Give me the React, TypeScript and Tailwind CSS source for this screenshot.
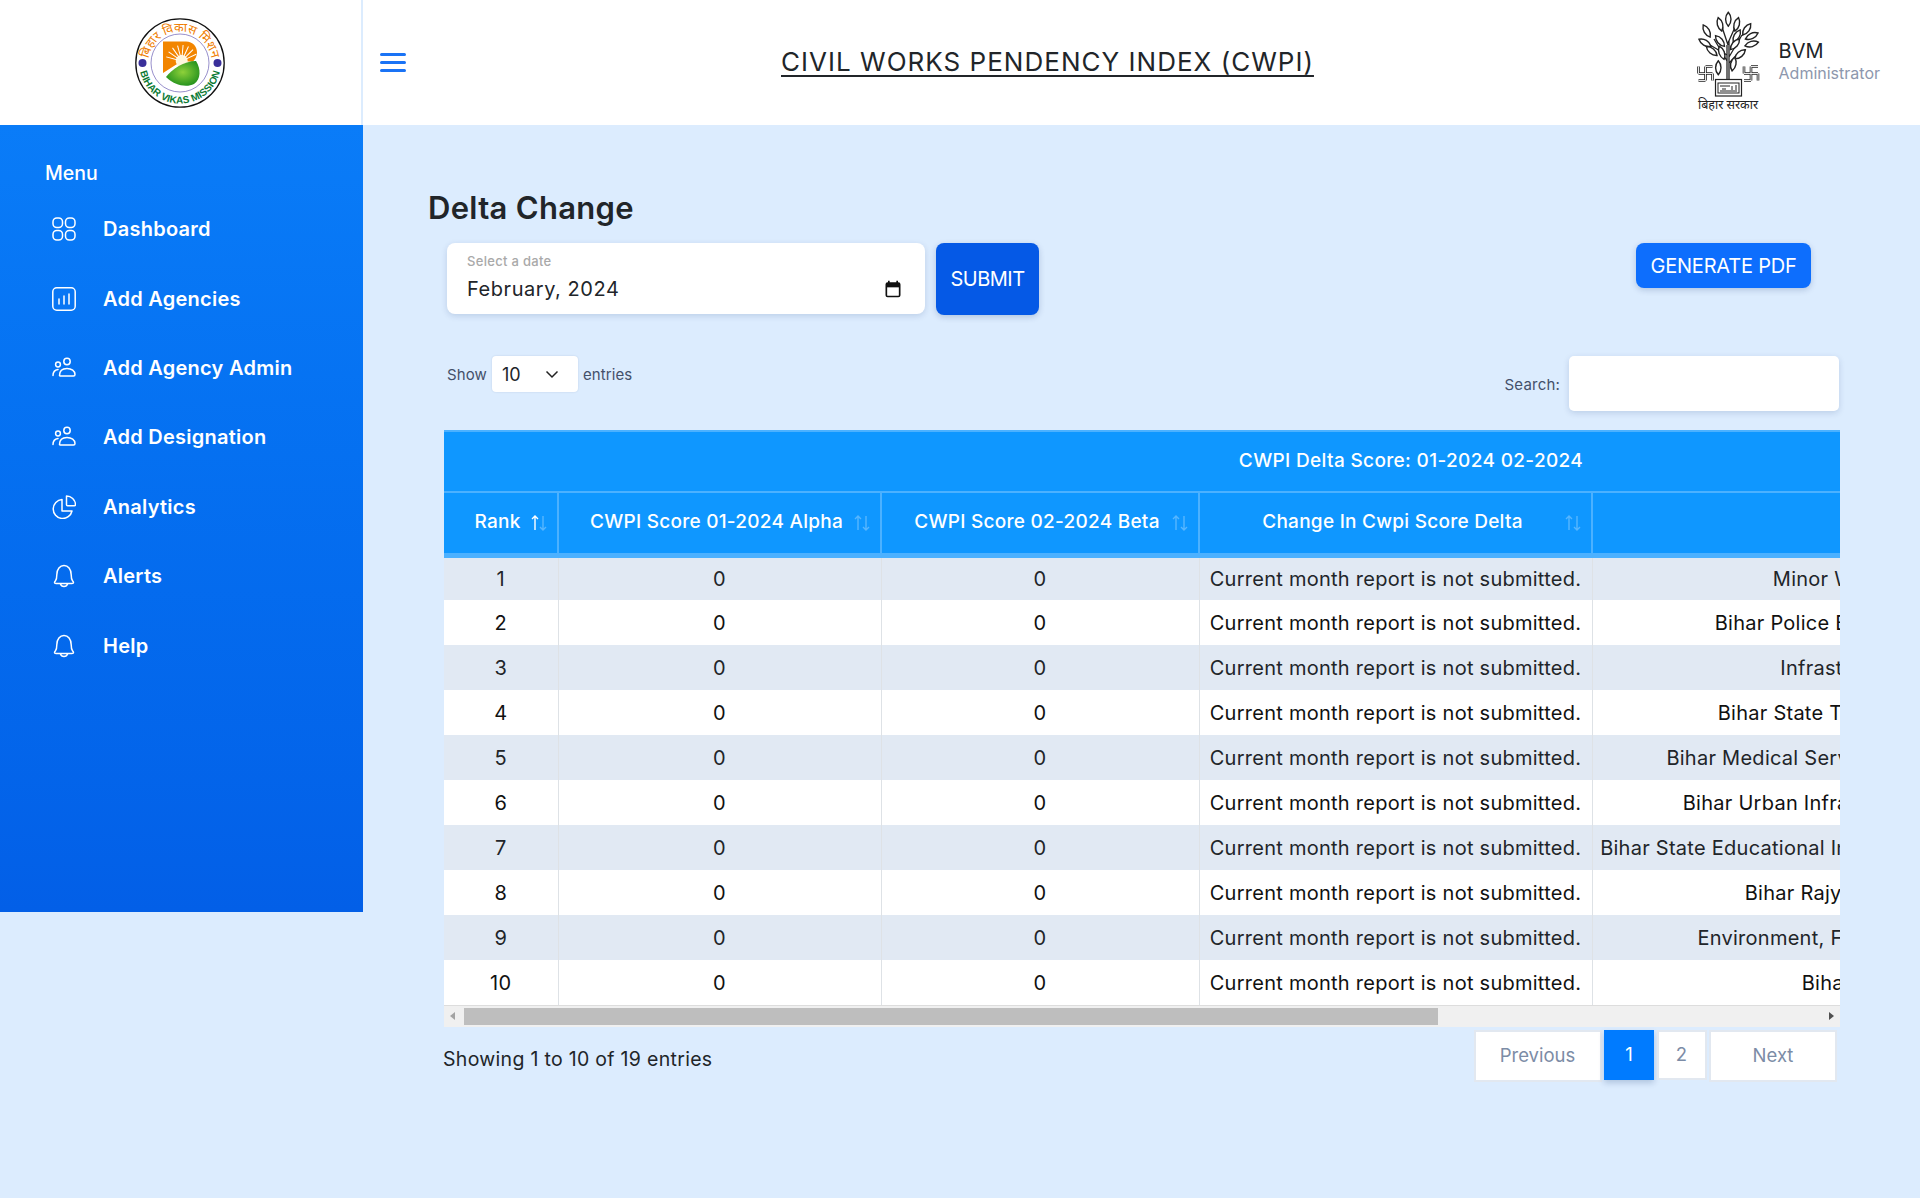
import React from "react";

const rows = [
  "Minor Water Resources Division",
  "Bihar Police Building Construction Corp. Ltd",
  "Infrastructure Devel. Authority",
  "Bihar State Tourism Development Corp. Ltd",
  "Bihar Medical Services & Infrastructure Corp. Limited.",
  "Bihar Urban Infrastructure Development Corp. Ltd.",
  "Bihar State Educational Infrastructure Development Corporation Ltd",
  "Bihar Rajya Pul Nirman Nigam Limited",
  "Environment, Forest and Climate Change Deptt.",
  "Bihar Rural Roads Agency",
];

function Sort({ active = false }: { active?: boolean }) {
  return (
    <svg width="18" height="18" viewBox="0 0 18 18" fill="none" strokeWidth="1.4" stroke="white" className="absolute right-[9px] top-1/2 -translate-y-1/2">
      <path d="M5 16V2M2 5l3-3 3 3" opacity={active ? 1 : 0.3} />
      <path d="M13 2v14M10 13l3 3 3-3" opacity="0.3" />
    </svg>
  );
}

function NavIcon({ kind }: { kind: string }) {
  const c = { width: 24, height: 24, viewBox: "0 0 24 24", fill: "none", stroke: "white", strokeWidth: 1.5, strokeLinecap: "round" as const, strokeLinejoin: "round" as const };
  if (kind === "grid")
    return (
      <svg {...c}>
        <rect x="1" y="1" width="9.5" height="9.5" rx="3.8" />
        <rect x="13.5" y="1" width="9.5" height="9.5" rx="3.8" />
        <rect x="1" y="13.5" width="9.5" height="9.5" rx="3.8" />
        <rect x="13.5" y="13.5" width="9.5" height="9.5" rx="3.8" />
      </svg>
    );
  if (kind === "chart")
    return (
      <svg {...c}>
        <rect x="0.8" y="0.8" width="22.4" height="22.4" rx="4" />
        <path d="M7 12v5M12 9v8M17 7v10" />
      </svg>
    );
  if (kind === "people")
    return (
      <svg {...c}>
        <circle cx="15" cy="5.5" r="3.2" />
        <circle cx="6" cy="8.5" r="2.4" />
        <path d="M7.5 19.5c0-4.5 3-7 7.5-7s8 2.5 8 6c0 .8-.5 1.5-1.5 1.5H8.5c-.6 0-1-.2-1-.5z" />
        <path d="M1 19.5c0-3 1.5-5.5 5-6" />
      </svg>
    );
  if (kind === "pie")
    return (
      <svg {...c}>
        <path d="M10 4.5a9.5 9.5 0 1 0 10 11.5H10z" />
        <path d="M14.5 1a9 9 0 0 1 9 8.5c0 .8-.5 1.2-1.2 1.2H15.5a1 1 0 0 1-1-1z" />
      </svg>
    );
  return (
    <svg {...c}>
      <path d="M2.5 18.5c0-.5.4-1 1-1.700 1-1.200 1.300-2.300 1.300-6C4.800 5 8 1.500 12 1.500s7.200 3.500 7.200 9.300c0 3.700.3 4.800 1.300 6 .6.700 1 1.200 1 1.700 0 .7-.6 1-1.500 1H4c-.9 0-1.500-.3-1.500-1z" />
      <path d="M8.500 20c.5 1.700 2 2.500 3.500 2.500s3-.8 3.500-2.500" />
    </svg>
  );
}

function Logo() {
  return (
    <svg width="92" height="92" viewBox="0 0 92 92" className="block">
      <defs>
        <path id="topArc" d="M14.5 50a31.700 31.700 0 1 1 63 0" />
        <path id="botArc" d="M5.5 52a41 41 0 0 0 81 0" />
        <radialGradient id="leafG" cx="0.5" cy="0.45" r="0.6">
          <stop offset="0" stopColor="#8ed13a" />
          <stop offset="1" stopColor="#1f8f1c" />
        </radialGradient>
      </defs>
      <circle cx="46" cy="46" r="44.2" fill="white" stroke="#111" strokeWidth="1.3" />
      <circle cx="46" cy="46" r="29" fill="none" stroke="#6a5fb5" strokeWidth="0.7" />
      <circle cx="8.5" cy="46" r="4" fill="#3a2f9a" />
      <circle cx="83.5" cy="46" r="4" fill="#3a2f9a" />
      <path d="M29 24.5H52c7 0 11 5 11 11 0 4-2 7-4 9H47L29 56z" fill="#f28500" />
      <circle cx="47.7" cy="44" r="6" fill="#fff6dc" />
      {[-75, -55, -35, -15, 5, 25, 45, 65].map((a) => (
        <rect key={a} x="47.2" y="28" width="1" height="11" fill="#fff" transform={`rotate(${a} 47.7 44)`} />
      ))}
      <path d="M32 60C38 52 50 44 62 44 67 52 67 62 60 67 52 71 40 68 32 60z" fill="url(#leafG)" />
      <text fontSize="12.5" fill="#ef7d00" fontFamily="'Noto Sans Devanagari','Lohit Devanagari','Noto Sans',sans-serif">
        <textPath href="#topArc" startOffset="50%" textAnchor="middle">बिहार विकास मिशन</textPath>
      </text>
      <text fontSize="10" fontWeight="700" fill="#0b7a34" fontFamily="'Liberation Sans',sans-serif">
        <textPath href="#botArc" startOffset="50%" textAnchor="middle">BIHAR VIKAS MISSION</textPath>
      </text>
    </svg>
  );
}

const leaves: [number, number, number][] = [
  [10.7, 20, -30], [24, 13.3, -15], [32.3, 8.3, 0], [40.7, 13.3, 15], [50.7, 18.3, 35], [55.7, 25, 65],
  [9, 31.7, -60], [24, 30, -40], [40.7, 25, 30], [55.7, 33, 75], [15.7, 40, -50], [25.7, 41.7, -20],
  [39, 33.3, 40], [44, 43.3, 50], [22.3, 56.7, 0], [37.3, 53, 10],
];

function Cross({ x }: { x: number }) {
  const d = "M7 0V14M0 7H14M7 0H14M14 7V14M7 14H0M0 7V0";
  return (
    <g transform={`translate(${x} 55.5)`} fill="none">
      <path d={d} stroke="#222" strokeWidth="2.6" />
      <path d={d} stroke="#fff" strokeWidth="0.9" />
    </g>
  );
}

function Emblem() {
  return (
    <svg width="64" height="100" viewBox="0 0 64 100" className="block">
      <path d="M31 68V34M33 68V30M31 50L18 28M31 44L14 34M33 46L46 24M33 52L46 40M32 34L26 16M32 32L40 14" stroke="#222" strokeWidth="1.3" fill="none" />
      {leaves.map(([x, y, r], i) => (
        <path key={i} d="M0-7C3.6-3 3.6 3 0 7-3.6 3-3.6-3 0-7z" fill="white" stroke="#222" strokeWidth="1.4" transform={`translate(${x} ${y}) rotate(${r})`} />
      ))}
      <Cross x={2.5} />
      <Cross x={48} />
      <rect x="19.5" y="68.5" width="26" height="16.5" fill="white" stroke="#222" strokeWidth="1.2" />
      <rect x="22" y="72" width="21" height="10" fill="white" stroke="#222" strokeWidth="1" />
      <path d="M24 75h10M26 78h4M36 75v4M40 74v5M24 80h17" stroke="#222" strokeWidth="1" />
      <text x="32" y="98" textAnchor="middle" fontSize="12.5" fill="#222" fontFamily="'Noto Sans Devanagari','Lohit Devanagari','Noto Sans',sans-serif">बिहार सरकार</text>
    </svg>
  );
}

const nav = [
  ["grid", "Dashboard"],
  ["chart", "Add Agencies"],
  ["people", "Add Agency Admin"],
  ["people", "Add Designation"],
  ["pie", "Analytics"],
  ["bell", "Alerts"],
  ["bell", "Help"],
];

export default function App() {
  return (
    <div className="min-h-[1198px] bg-[#dcecfe] text-[#212529] font-['Inter','Liberation_Sans',sans-serif]">
      <header className="flex h-[125px] bg-white">
        <div className="flex w-[363px] shrink-0 items-center justify-center border-r-2 border-[#dcecfe] pr-[1px]">
          <Logo />
        </div>
        <button className="ml-[17px] flex w-[26px] flex-col gap-[5.5px] self-center">
          <span className="h-[2.5px] w-[26px] rounded bg-[#1a73f5]" />
          <span className="h-[2.5px] w-[26px] rounded bg-[#1a73f5]" />
          <span className="h-[2.5px] w-[26px] rounded bg-[#1a73f5]" />
        </button>
        <h1 className="ml-[375px] -mt-[3px] self-center text-[26px] font-normal tracking-[1.02px] underline underline-offset-[4px] whitespace-nowrap">
          CIVIL WORKS PENDENCY INDEX (CWPI)
        </h1>
        <div className="ml-auto mr-[40px] flex items-center">
          <div className="mb-[4px]"><Emblem /></div>
          <div className="ml-[19px] -mt-[4px]">
            <div className="text-[20px] leading-[26px] text-[#212529]">BVM</div>
            <div className="text-[16px] leading-[19px] text-[#8d97ad]">Administrator</div>
          </div>
        </div>
      </header>

      <div className="flex">
        <aside className="h-[787px] w-[363px] shrink-0 bg-gradient-to-b from-[#0a7cf8] to-[#035fe7] pl-[45px] pt-[35px] text-white">
          <div className="text-[19.5px] font-medium leading-[26px]">Menu</div>
          <nav className="mt-[8.5px] flex flex-col">
            {nav.map(([k, t]) => (
              <div key={t} className="flex h-[69.4px] items-center">
                <span className="ml-[7px] flex w-[24px] justify-center"><NavIcon kind={k} /></span>
                <span className="ml-[27px] text-[20px] font-semibold tracking-[0.25px]">{t}</span>
              </div>
            ))}
          </nav>
        </aside>

        <main className="min-w-0 flex-1 pl-[65px] pt-[65px]">
          <h2 className="text-[31px] font-semibold leading-[36px] tracking-[0.3px]">Delta Change</h2>

          <div className="mt-[17px] flex items-start pl-[19px]">
            <div className="relative h-[71px] w-[478px] rounded-[8px] bg-white shadow-[0_2px_6px_rgba(0,40,100,0.15)]">
              <div className="absolute left-[20px] top-[9px] text-[13px] font-medium tracking-[0.3px] text-[#a9a9a9]">Select a date</div>
              <div className="absolute left-[20px] top-[32px] text-[20px] leading-[28px] tracking-[0.55px]">February, 2024</div>
              <svg className="absolute right-[22px] top-[36px]" width="20" height="20" viewBox="0 0 24 24" fill="none">
                <path d="M7 2v3M17 2v3" stroke="#111" strokeWidth="2" />
                <rect x="4" y="5" width="16" height="16" rx="1.5" stroke="#111" strokeWidth="2" />
                <rect x="4" y="5" width="16" height="5" fill="#111" />
              </svg>
            </div>
            <button className="ml-[11px] h-[72px] w-[103px] rounded-[8px] bg-[#0559e6] text-[20px] tracking-[-0.5px] text-white shadow-[0_2px_6px_rgba(0,40,100,0.2)]">
              SUBMIT
            </button>
            <button className="ml-auto mr-[109px] h-[45px] w-[175px] rounded-[8px] bg-[#0d6efd] text-[20px] tracking-[-0.2px] text-white shadow-[0_2px_6px_rgba(0,40,100,0.2)]">
              GENERATE PDF
            </button>
          </div>

          <div className="mt-[41px] ml-[19px] mr-[81px] flex h-[55px] items-start justify-between">
            <div className="flex h-[36px] items-center text-[15px] tracking-[0.1px] text-[#44506a]">
              <span className="pt-[2px]">Show</span>
              <div className="ml-[5px] flex h-[36px] w-[86px] items-center justify-between rounded-[4px] bg-white pl-[10px] pr-[19px] shadow-[0_0_2px_rgba(0,40,100,0.15)]">
                <span className="text-[18px] text-[#212529]">10</span>
                <svg width="14" height="14" viewBox="0 0 14 14" fill="none" stroke="#222" strokeWidth="1.5"><path d="M1.5 4.5 7 10l5.5-5.5" /></svg>
              </div>
              <span className="ml-[5px] pt-[2px]">entries</span>
            </div>
            <div className="flex h-[55px] items-center text-[15px] tracking-[0.2px] text-[#44506a]">
              <span className="mr-[9px] pt-[4px]">Search:</span>
              <div className="h-[55px] w-[270px] rounded-[5px] bg-white shadow-[0_2px_6px_rgba(0,40,100,0.15)]" />
            </div>
          </div>

          <div className="mt-[19px] ml-[16px] w-[1396px] overflow-hidden">
            <table className="w-[1818px] table-fixed border-collapse text-[20px] tracking-[0.26px]">
              <colgroup>
                <col className="w-[114px]" />
                <col className="w-[323px]" />
                <col className="w-[318px]" />
                <col className="w-[393px]" />
                <col className="w-[670px]" />
              </colgroup>
              <thead>
                <tr className="h-[61px] bg-[#0f97ff] text-white">
                  <th colSpan={5} className="border-y-2 border-[#4cb1ff] text-center text-[19px] font-medium tracking-[0.35px]">
                    <span className="relative left-[58px]">CWPI Delta Score: 01-2024 02-2024</span>
                  </th>
                </tr>
                <tr className="h-[63px] bg-[#0f97ff] text-[19px] text-white">
                  {["Rank", "CWPI Score 01-2024 Alpha", "CWPI Score 02-2024 Beta", "Change In Cwpi Score Delta", ""].map((h, i) => (
                    <th key={i} className="relative border-x-2 border-b-[5px] border-l-0 border-[#4cb1ff] pb-[2px] pr-[6px] text-center font-medium whitespace-nowrap">
                      {h}
                      {h && <Sort active={i === 0} />}
                    </th>
                  ))}
                </tr>
              </thead>
              <tbody>
                {rows.map((r, i) => {
                  const odd = i % 2 === 0;
                  return (
                    <tr key={i} className={`h-[45px] ${odd ? "bg-[#e1e9f3] text-[#212529]" : "bg-white text-[#111]"}`}>
                      <td className="border-r border-[#dee2e6] text-center">{i + 1}</td>
                      <td className="border-r border-[#dee2e6] text-center">0</td>
                      <td className="border-r border-[#dee2e6] text-center">0</td>
                      <td className="border-r border-[#dee2e6] text-center whitespace-nowrap">Current month report is not submitted.</td>
                      <td className="border-r border-[#dee2e6] text-center whitespace-nowrap">{r}</td>
                    </tr>
                  );
                })}
              </tbody>
            </table>
            <div className="relative h-[22px] border-t border-[#dddddd] bg-[#f0f0f0]">
              <div className="absolute left-[20px] top-[2px] h-[17px] w-[974px] bg-[#bebebe]" />
              <div className="absolute left-[6px] top-[6px] h-0 w-0 border-y-[4.5px] border-r-[5px] border-y-transparent border-r-[#a3a3a3]" />
              <div className="absolute right-[6px] top-[6px] h-0 w-0 border-y-[4.5px] border-l-[5px] border-y-transparent border-l-[#505050]" />
            </div>
          </div>

          <div className="ml-[15px] mr-[83px] mt-[3px] flex items-start justify-between">
            <div className="mt-[15px] text-[19.5px] leading-[28px] tracking-[0.3px]">Showing 1 to 10 of 19 entries</div>
            <div className="flex items-start gap-[2.5px] text-[18.5px] text-[#7c8ca6]">
              <div className="flex h-[52px] w-[128px] items-center justify-center border-2 border-[#e2e8f0] bg-white">Previous</div>
              <div className="flex h-[50px] w-[50px] items-center justify-center bg-[#007bff] text-white shadow-[0_3px_6px_rgba(0,40,100,0.2)]">1</div>
              <div className="flex h-[50px] w-[50px] items-center justify-center border-2 border-[#e2e8f0] bg-white">2</div>
              <div className="flex h-[52px] w-[128px] items-center justify-center border-2 border-[#e2e8f0] bg-white">Next</div>
            </div>
          </div>
        </main>
      </div>
    </div>
  );
}
